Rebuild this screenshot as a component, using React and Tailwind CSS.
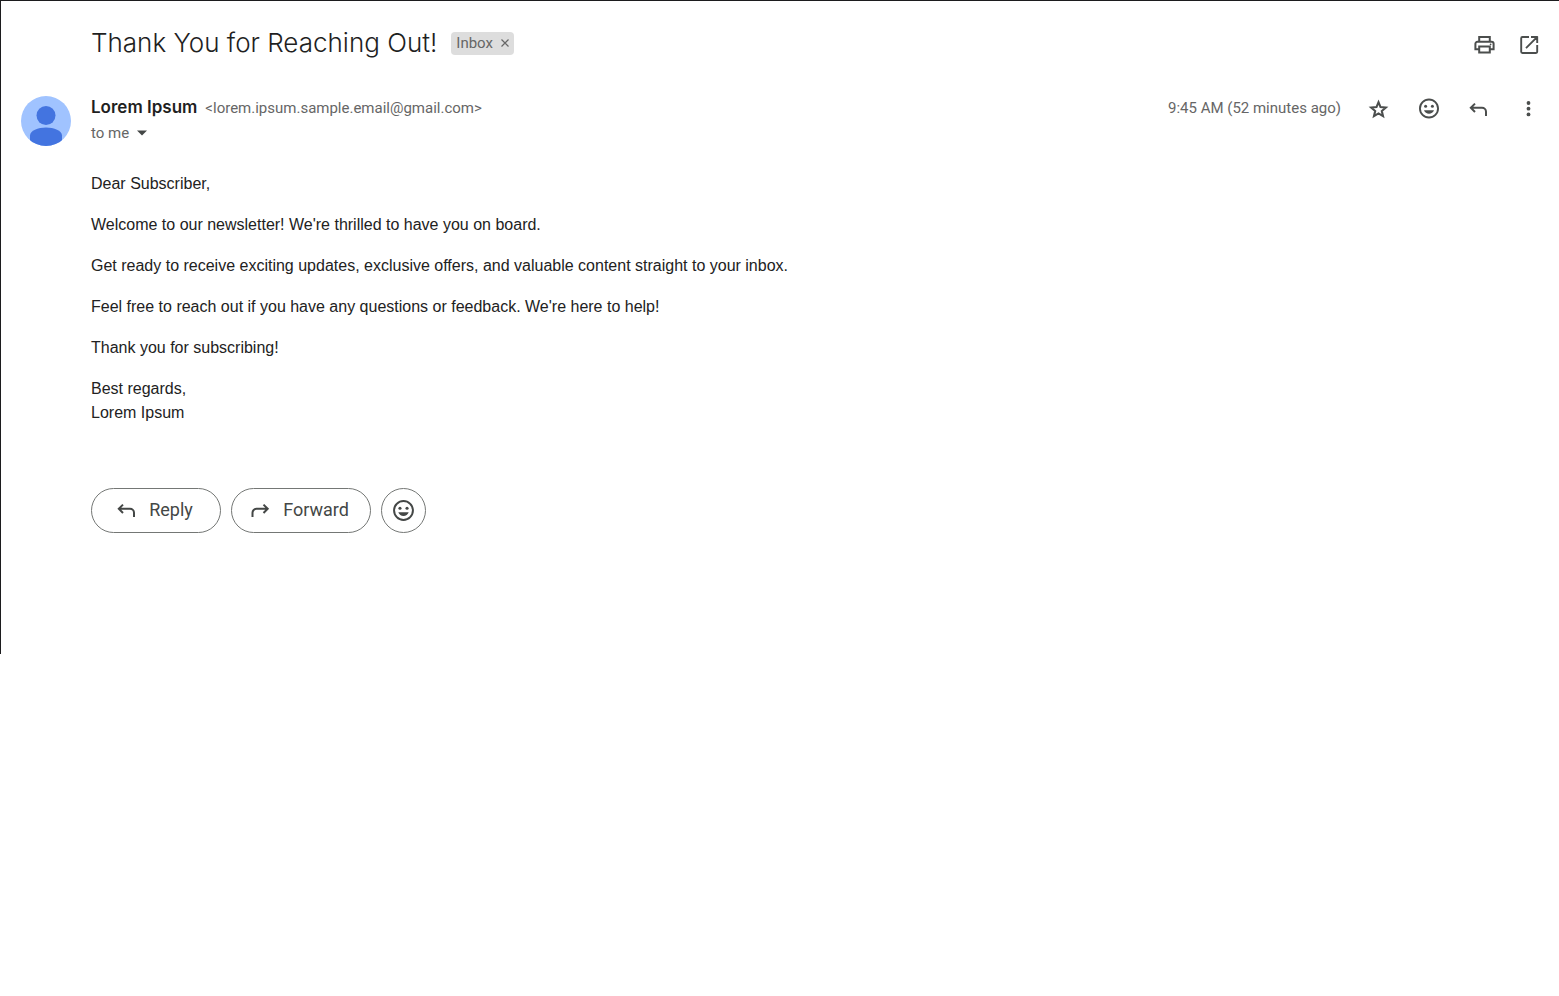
import React from "react";

const paragraphs = [
  "Dear Subscriber,",
  "Welcome to our newsletter! We're thrilled to have you on board.",
  "Get ready to receive exciting updates, exclusive offers, and valuable content straight to your inbox.",
  "Feel free to reach out if you have any questions or feedback. We're here to help!",
  "Thank you for subscribing!",
];

function Svg({ children, className = "size-6" }) {
  return (
    <svg viewBox="0 0 24 24" fill="currentColor" aria-hidden="true" className={className}>
      {children}
    </svg>
  );
}

function PrintIcon() {
  return (
    <Svg>
      <path
        d="M7.2 7.8V4h10.6v3.8M6.5 16.3H3.4v-5.5a2 2 0 0 1 2-2h14.2a2 2 0 0 1 2 2v5.5h-3.1M7.2 13.4h10.6v6.2H7.2z"
        fill="none"
        stroke="currentColor"
        strokeWidth="2"
      />
      <circle cx="18.6" cy="11.3" r="0.9" />
    </Svg>
  );
}

function OpenIcon() {
  return (
    <Svg>
      <path
        d="M12 4H5.4C4.6 4 4.2 4.4 4.2 5.2v13.6c0 .8.4 1.2 1.2 1.2H19c.8 0 1.2-.4 1.2-1.2V12M14 4h6.8M20.2 3.4V10M20 4.2l-11 11"
        fill="none"
        stroke="currentColor"
        strokeWidth="1.9"
      />
    </Svg>
  );
}

function StarIcon() {
  return (
    <Svg>
      <path
        d="M11.5 5.2l2 4.9 5.3.4-4 3.5 1.2 5.1-4.5-2.7L7 19.1 8.200 14l-4-3.5 5.3-.4z"
        fill="none"
        stroke="currentColor"
        strokeWidth="2.1"
      />
    </Svg>
  );
}

function SmileIcon() {
  return (
    <Svg className="size-[25px]">
      <path d="M12 2C6.47 2 2 6.5 2 12s4.47 10 10 10 10-4.5 10-10S17.5 2 12 2zm0 18.1a8.1 8.1 0 1 1 0-16.2 8.1 8.1 0 0 1 0 16.2z" />
      <circle cx="8.6" cy="9.8" r="1.5" />
      <circle cx="15.4" cy="9.8" r="1.5" />
      <path d="M12 17.3c2.3 0 4.2-1.2 5-3.5H7c.8 2.3 2.7 3.5 5 3.5z" />
    </Svg>
  );
}

function ReplyIcon() {
  return (
    <Svg>
      <path
        d="M8 6.6 3.8 10.8 8 15M3.8 10.8H15a4 4 0 0 1 4 4v4.200"
        fill="none"
        stroke="currentColor"
        strokeWidth="2"
      />
    </Svg>
  );
}

function ForwardIcon() {
  return (
    <Svg>
      <path
        d="M14.500 6.600l4.200 4.200-4.200 4.200M18.700 10.800H7.500a4 4 0 0 0-4 4V19"
        fill="none"
        stroke="currentColor"
        strokeWidth="2"
      />
    </Svg>
  );
}

function MoreIcon() {
  return (
    <Svg>
      <circle cx="11.5" cy="6" r="1.9" />
      <circle cx="11.5" cy="11.7" r="1.9" />
      <circle cx="11.5" cy="17.4" r="1.9" />
    </Svg>
  );
}

function Avatar() {
  return (
    <svg viewBox="0 0 50 50" className="size-[50px] shrink-0" role="img" aria-label="Lorem Ipsum">
      <clipPath id="avatar-circle">
        <circle cx="25" cy="25" r="25" />
      </clipPath>
      <g clipPath="url(#avatar-circle)">
        <rect width="50" height="50" fill="#a0c3ff" />
        <circle cx="25" cy="19.5" r="9.5" fill="#4374e0" />
        <path d="M9 50V39.5C9 34.5 17 31.5 25 31.5s16 3 16 8V50z" fill="#4374e0" />
      </g>
    </svg>
  );
}

function IconButton({ label, children }) {
  return (
    <button type="button" aria-label={label} className="flex size-6 items-center justify-center text-[#4b4e4d]">
      {children}
    </button>
  );
}

const pill =
  "flex h-[45px] items-center justify-center rounded-full border border-[#747775] text-lg text-[#444746]";

export default function App() {
  return (
    <main className="border-l border-t border-[#1c1c1e] bg-white pb-[121px] pl-5 pr-[18px] pt-[22px] font-['Roboto',sans-serif] text-[#666666]">
      <header className="flex h-11 items-center justify-between pl-[70px]">
        <div className="flex items-center gap-3.5 pb-1">
          <h1 className="font-['Inter',sans-serif] text-[26px] font-light leading-10 text-[#1f1f1f]">
            Thank You for Reaching Out!
          </h1>
          <span className="flex h-[23px] items-center gap-2 rounded bg-[#dddddd] px-[5px] text-[15px] text-[#666666]">
            Inbox
            <button type="button" aria-label="Remove label Inbox">
              <svg viewBox="0 0 8 8" className="size-2" aria-hidden="true">
                <path d="M.5.5l7 7M7.5.5l-7 7" stroke="currentColor" strokeWidth="1.2" />
              </svg>
            </button>
          </span>
        </div>
        <div className="flex gap-[21px]">
          <IconButton label="Print all"><PrintIcon /></IconButton>
          <IconButton label="Open in new window"><OpenIcon /></IconButton>
        </div>
      </header>

      <section className="mt-[29px] flex gap-5">
        <Avatar />
        <div className="flex flex-1 justify-between">
          <div>
            <div className="flex h-6 items-center gap-2">
              <h2 className="font-['Inter',sans-serif] text-[17px] font-semibold text-[#1f1f1f]">Lorem Ipsum</h2>
              <span className="text-[15px]">&lt;lorem.ipsum.sample.email@gmail.com&gt;</span>
            </div>
            <button type="button" className="flex h-[26px] items-center gap-2 text-[15px]">
              to me
              <svg viewBox="0 0 10 6" className="h-1.5 w-2.5" aria-hidden="true">
                <path d="M0 .5h10L5 5.5z" fill="#444746" />
              </svg>
            </button>
          </div>
          <div className="flex h-[25px] items-center">
            <time className="mr-[26px] text-[15px]">9:45 AM (52 minutes ago)</time>
            <div className="flex gap-[26px]">
              <IconButton label="Star"><StarIcon /></IconButton>
              <IconButton label="Add reaction"><SmileIcon /></IconButton>
              <IconButton label="Reply"><ReplyIcon /></IconButton>
              <IconButton label="More"><MoreIcon /></IconButton>
            </div>
          </div>
        </div>
      </section>

      <article className="ml-[70px] mt-[26px] flex flex-col gap-[17px] font-['Liberation_Sans',Arial,sans-serif] text-base leading-6 text-[#222222]">
        {paragraphs.map((text) => (
          <p key={text}>{text}</p>
        ))}
        <p>
          Best regards,
          <br />
          Lorem Ipsum
        </p>
      </article>

      <div className="ml-[70px] mt-[63px] flex gap-2.5">
        <button type="button" className={`${pill} w-[130px] gap-2.5 pb-0.5 pr-1`}>
          <ReplyIcon />
          Reply
        </button>
        <button type="button" className={`${pill} w-[140px] gap-2.5 pb-0.5 pr-1`}>
          <ForwardIcon />
          Forward
        </button>
        <button type="button" aria-label="Add reaction" className={`${pill} w-[45px]`}>
          <SmileIcon />
        </button>
      </div>
    </main>
  );
}
